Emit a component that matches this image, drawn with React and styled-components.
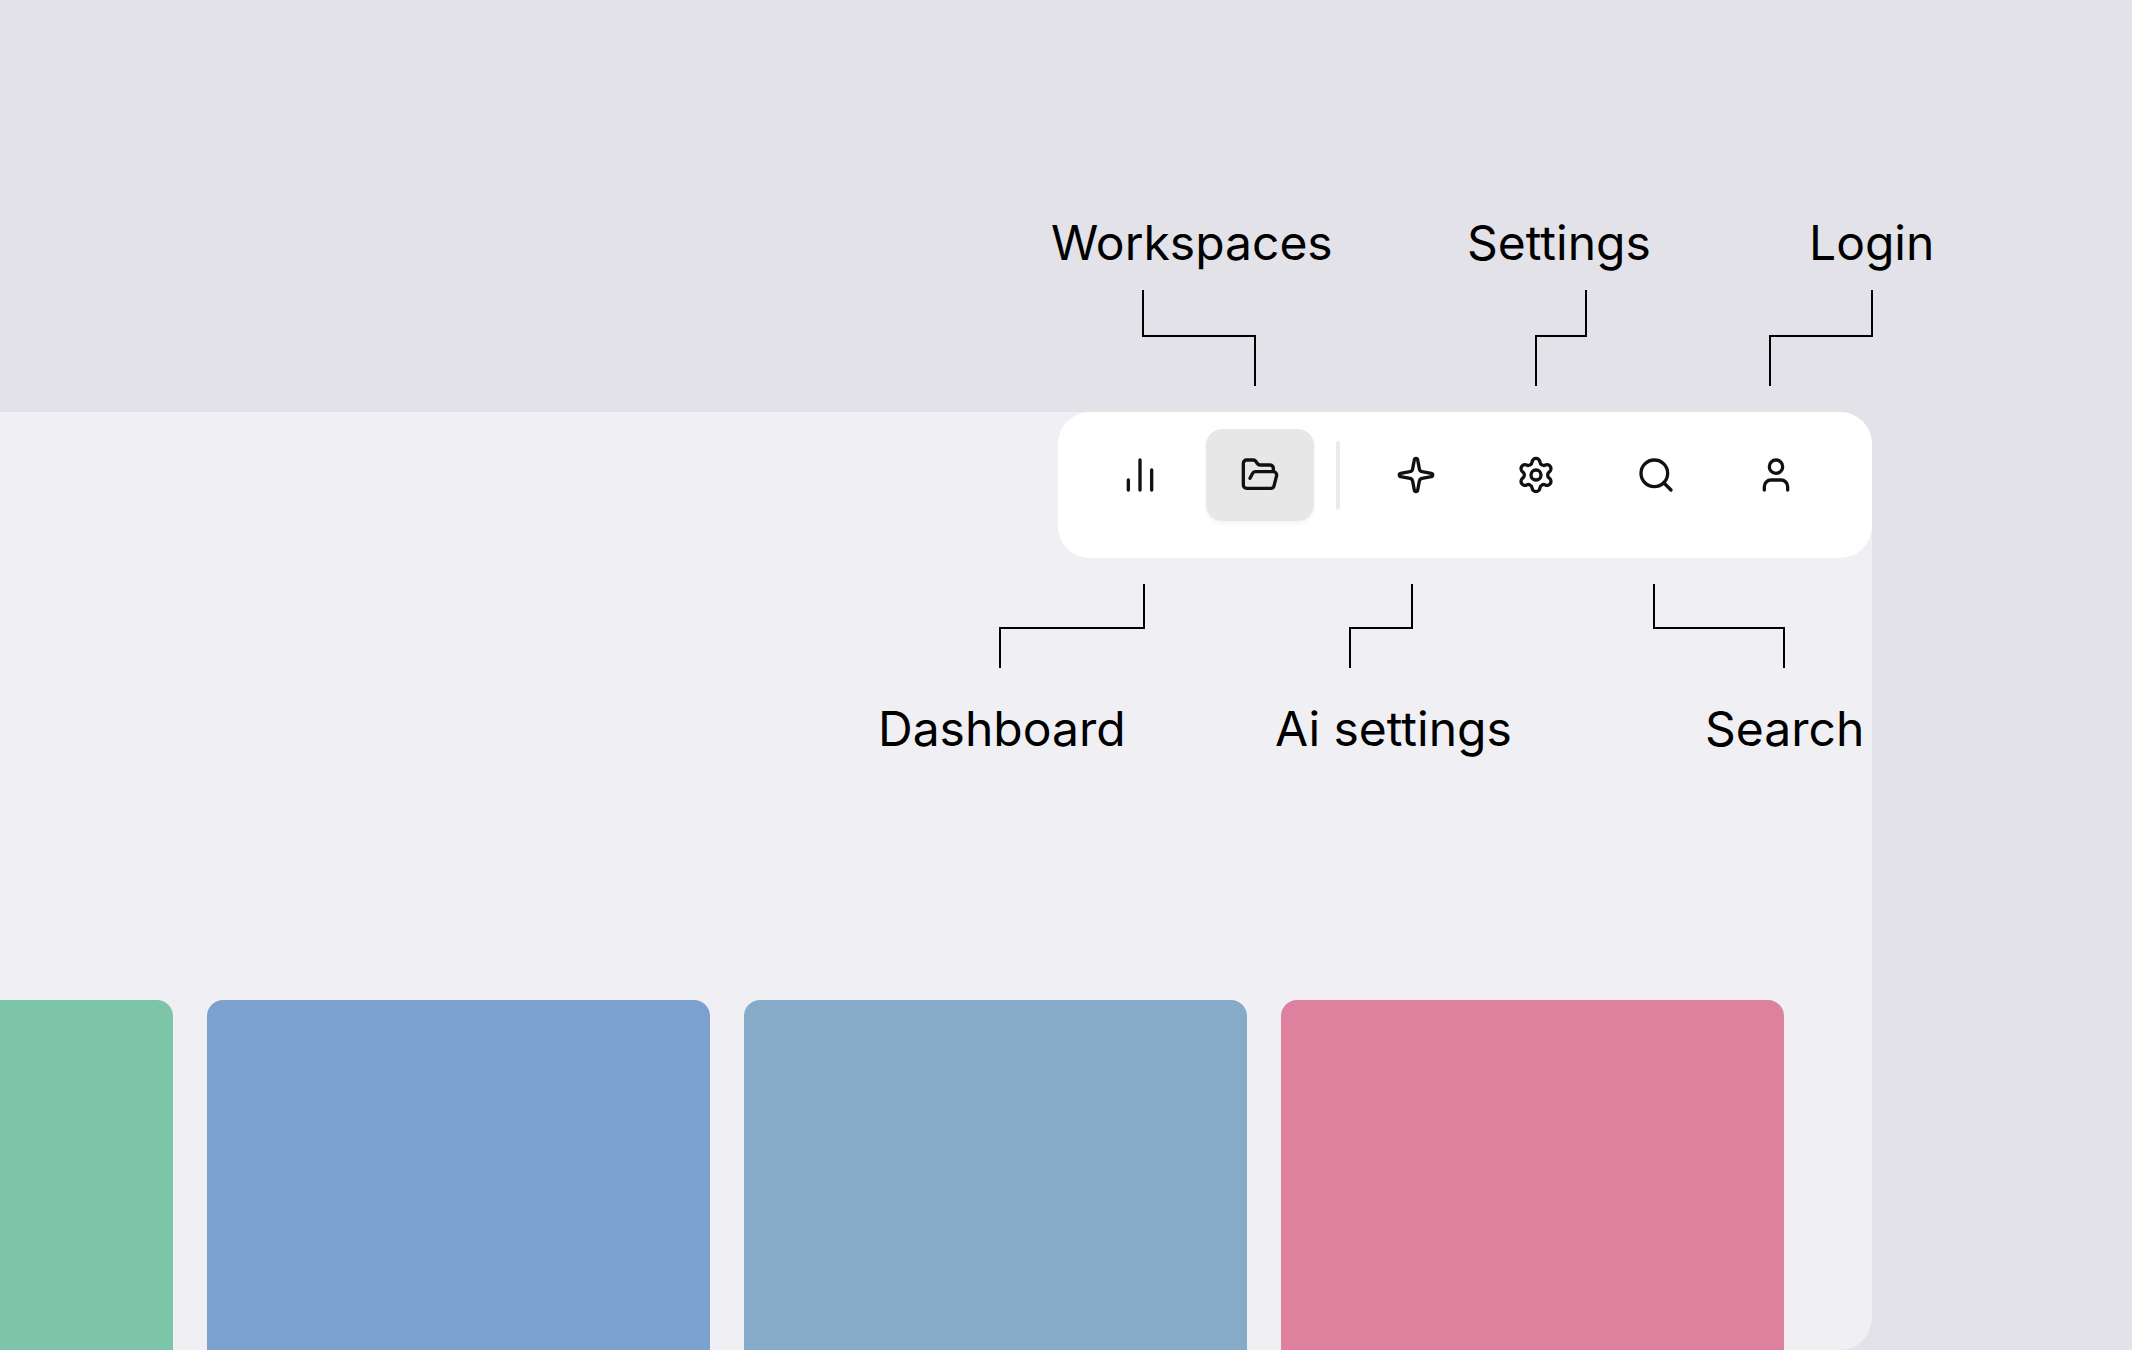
import React, { useState } from 'react';
import styled, { createGlobalStyle } from 'styled-components';
import {
  ChartNoAxesColumn,
  FolderOpen,
  Search,
  Settings,
  Sparkle,
  User,
} from 'lucide-react';

const GlobalStyle = createGlobalStyle`
  * {
    box-sizing: border-box;
  }

  body {
    margin: 0;
    background-color: #e3e2e8;
    font-family: Inter, 'Liberation Sans', sans-serif;
    color: #000;
  }
`;

const Page = styled.div`
  display: flex;
  flex-direction: column;
  min-height: 100vh;
  overflow: hidden;
`;

const Header = styled.header`
  display: flex;
  flex-direction: column;
  align-items: flex-end;
  padding: 214px 200px 26px 0;
`;

const LabelRow = styled.div`
  display: grid;
  grid-template-columns: ${({ $columns }) => $columns};
`;

const Label = styled.span`
  font-size: 48px;
  line-height: 58px;
  white-space: nowrap;
`;

const Connectors = styled.svg`
  display: block;
  overflow: visible;
  fill: none;
  stroke: #000;
  stroke-width: 2;
`;

const HeaderConnectors = styled(Connectors)`
  margin: 18px 60px 0 0;
`;

const Panel = styled.main`
  display: flex;
  flex: 1;
  flex-direction: column;
  align-items: flex-end;
  margin-right: 260px;
  background-color: #f0eff4;
  border-radius: 0 32px 32px 0;
`;

const Toolbar = styled.nav`
  display: flex;
  align-items: center;
  gap: 12px;
  padding: 17px 42px 37px 28px;
  background-color: #fff;
  border-radius: 32px;
`;

const ToolButton = styled.button`
  display: flex;
  align-items: center;
  justify-content: center;
  width: 108px;
  height: 92px;
  padding: 0;
  border: none;
  border-radius: 16px;
  background-color: ${({ $active }) => ($active ? '#e7e7e7' : 'transparent')};
  box-shadow: ${({ $active }) => ($active ? '0 3px 4px rgba(0, 0, 0, 0.04)' : 'none')};
  color: #111;
  cursor: pointer;
`;

const Divider = styled.div`
  width: 4px;
  height: 69px;
  margin: 0 10px;
  border-radius: 2px;
  background-color: #ebebeb;
`;

const PanelCallouts = styled.section`
  display: flex;
  flex-direction: column;
  align-items: flex-end;
  gap: 32px;
  padding: 26px 0 242px;
`;

const Cards = styled.section`
  display: flex;
  flex: 1;
  justify-content: flex-end;
  gap: 34px;
  width: 100%;
  min-height: 350px;
  padding-right: 88px;
`;

const Card = styled.div`
  flex: 0 0 503px;
  border-radius: 16px 16px 0 0;
  background-color: ${({ $color }) => $color};
`;

const tools = [
  { id: 'dashboard', Icon: ChartNoAxesColumn },
  { id: 'workspaces', Icon: FolderOpen, divider: true },
  { id: 'ai-settings', Icon: Sparkle },
  { id: 'settings', Icon: Settings },
  { id: 'search', Icon: Search },
  { id: 'login', Icon: User },
];

const cardColors = ['#7cc5a9', '#7ca1cf', '#86abc8', '#dd819e'];

const App = () => {
  const [active, setActive] = useState('workspaces');

  return (
    <Page>
      <GlobalStyle />
      <Header>
        <LabelRow $columns="416px 342px 123px">
          <Label id="workspaces">Workspaces</Label>
          <Label id="settings">Settings</Label>
          <Label id="login">Login</Label>
        </LabelRow>
        <HeaderConnectors width="730" height="96" aria-hidden="true">
          <path d="M1 0V46H113V96" />
          <path d="M444 0V46H394V96" />
          <path d="M730 0V46H628V96" />
        </HeaderConnectors>
      </Header>
      <Panel>
        <Toolbar>
          {tools.map(({ id, Icon, divider }) => (
            <React.Fragment key={id}>
              <ToolButton
                type="button"
                aria-labelledby={id}
                aria-pressed={active === id}
                $active={active === id}
                onClick={() => setActive(id)}
              >
                <Icon size={40} strokeWidth={2} />
              </ToolButton>
              {divider && <Divider />}
            </React.Fragment>
          ))}
        </Toolbar>
        <PanelCallouts>
          <Connectors width="872" height="84" aria-hidden="true">
            <path d="M144 0V44H0V84" />
            <path d="M412 0V44H350V84" />
            <path d="M654 0V44H784V84" />
          </Connectors>
          <LabelRow $columns="397px 430px 167px">
            <Label id="dashboard">Dashboard</Label>
            <Label id="ai-settings">Ai settings</Label>
            <Label id="search">Search</Label>
          </LabelRow>
        </PanelCallouts>
        <Cards>
          {cardColors.map((color) => (
            <Card key={color} $color={color} />
          ))}
        </Cards>
      </Panel>
    </Page>
  );
};

export default App;
